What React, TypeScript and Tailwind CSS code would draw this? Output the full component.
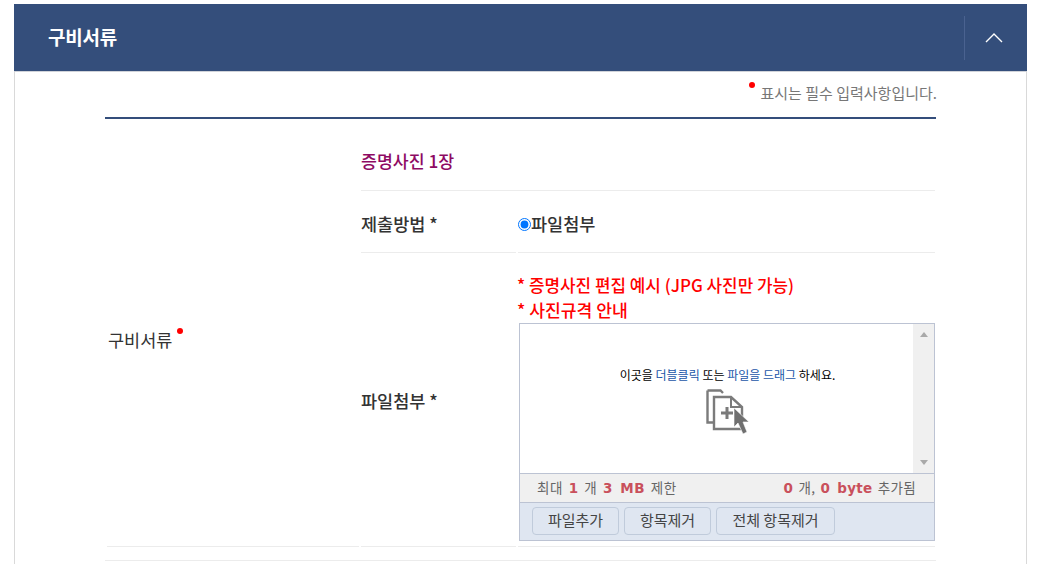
const FONT = "font-['Noto_Sans_CJK_KR','Noto_Sans',sans-serif]";

function RedDot({ className }: { className: string }) {
  return <span className={`inline-block w-[6px] h-[6px] rounded-full bg-[#ff0000] ${className}`} />;
}

function DropIcon() {
  return (
    <svg width="44" height="46" viewBox="0 0 44 46" fill="none" className="mt-[6px]">
      <path d="M1.5 1.5H14.5L17 4M1.5 1.5V33.5H8" stroke="#7b7b7b" strokeWidth="2.4" />
      <path d="M8 8H25L36 18V40H8Z" fill="#fff" stroke="#7b7b7b" strokeWidth="2.4" />
      <path d="M25 8V18H36" stroke="#7b7b7b" strokeWidth="2" />
      <path d="M15 24H27M21 18V30" stroke="#7b7b7b" strokeWidth="3" />
      <path d="M28 19V38L32 34L37 45L41 43L37 33H43Z" fill="#6f6f6f" stroke="#fff" strokeWidth="0.6" />
    </svg>
  );
}

function Num({ children }: { children: string }) {
  return <b className="text-[#c9505c] font-['DejaVu_Sans'] font-bold">{children}</b>;
}

function Uploader() {
  return (
    <div className="w-[416px] border border-[#bcc3d3] flex flex-col">
      <div className="flex h-[149px]">
        <div className="flex-1 flex flex-col items-center pl-[22px] pt-[43px] text-[12px] leading-[16px] text-black">
          <p>
            이곳을 <span className="text-[#1a56a8]">더블클릭</span> 또는{' '}
            <span className="text-[#1a56a8]">파일을 드래그</span> 하세요.
          </p>
          <DropIcon />
        </div>
        <div className="w-[21px] bg-[#f0f0f0] flex flex-col items-center justify-between py-[8px]">
          <span className="w-0 h-0 border-x-[4.5px] border-x-transparent border-b-[5px] border-b-[#a9a9a9]" />
          <span className="w-0 h-0 border-x-[4.5px] border-x-transparent border-t-[5px] border-t-[#a9a9a9]" />
        </div>
      </div>
      <div className="h-[29px] bg-[#f0f0f0] border-t border-[#bcc3d3] flex items-center justify-between pl-[17px] pr-[18px] text-[13.5px] text-[#666]">
        <p className="whitespace-pre tracking-[0.6px] [word-spacing:2px]">
          최대 <Num>1</Num> 개 <Num>3 MB</Num> 제한
        </p>
        <p className="whitespace-pre tracking-[0.3px] [word-spacing:2px]">
          <Num>0</Num> 개, <Num>0 byte</Num> 추가됨
        </p>
      </div>
      <div className="h-[38px] bg-[#dfe6f1] border-t border-[#bcc3d3] flex items-center gap-[5px] pl-[12px] pb-[2px]">
        {[
          ['파일추가', 'w-[87px]'],
          ['항목제거', 'w-[87px]'],
          ['전체 항목제거', 'w-[119px]'],
        ].map(([label, width]) => (
          <button
            key={label}
            className={`${width} h-[28px] rounded-[4px] border border-[#c0cbdb] bg-[#dfe6f1] text-[15px] text-[#444]`}
          >
            {label}
          </button>
        ))}
      </div>
    </div>
  );
}

export default function App() {
  return (
    <div className={`${FONT} w-[1045px] h-[564px] overflow-hidden bg-white pt-[4px] pl-[14px]`}>
      <div className="w-[1013px]">
        <div className="h-[68px] bg-[#344e7b] border-b border-[#d0d3d9] flex items-center justify-between pl-[34px]">
          <h2 className="text-[19px] font-bold tracking-[-0.2px] text-white">구비서류</h2>
          <div className="w-[63px] h-[44px] border-l border-[#4a6290] flex items-center justify-center pr-[4px]">
            <svg width="18" height="11" viewBox="0 0 18 11" fill="none">
              <path d="M1 10L9 2L17 10" stroke="#fff" strokeWidth="1.4" />
            </svg>
          </div>
        </div>

        <div className="h-[492px] border-x border-[#d9d9d9] pl-[90px] pr-[90px]">
          <p className="h-[45px] -mr-[1px] flex items-center justify-end text-[15px] text-[#777] pb-[3px]">
            <RedDot className="mr-[6px] mb-[16px]" />
            표시는 필수 입력사항입니다.
          </p>

          <div className="border-t-2 border-[#344e7b] w-[831px]">
            <div className="grid grid-cols-[256px_1fr] h-[428px]">
              <div className="border-b border-[#ececec] ml-[2px] mr-[2px] pl-[1px] flex items-center pt-[16px] text-[17.5px] text-[#333]">
                <span>구비서류</span>
                <RedDot className="ml-[5px] mb-[20px]" />
              </div>
              <div className="flex flex-col pr-[1px]">
                <div className="h-[72px] border-b border-[#ececec] pt-[30px] text-[17.3px] leading-[24px] font-medium text-[#8e0a63]">
                  증명사진 1장
                </div>
                <div className="h-[62px] grid grid-cols-[155px_1fr] gap-x-[2px]">
                  <div className="border-b border-[#ececec] flex items-center pt-[6px] text-[17.5px] font-medium text-[#333]">
                    제출방법 *
                  </div>
                  <div className="border-b border-[#ececec] flex items-center pt-[6px] text-[17.5px] font-medium text-[#333]">
                    <input type="radio" defaultChecked className="w-[13px] h-[13px] m-0 accent-[#0075ff]" />
                    파일첨부
                  </div>
                </div>
                <div className="h-[294px] grid grid-cols-[155px_1fr] gap-x-[2px]">
                  <div className="border-b border-[#ececec] flex items-center pt-[4px] text-[17.5px] font-medium text-[#333]">
                    파일첨부 *
                  </div>
                  <div className="border-b border-[#ececec] pt-[19px]">
                    <p className="-ml-[1px] text-[16.9px] leading-[25px] font-medium text-[#ff0000]">* 증명사진 편집 예시 (JPG 사진만 가능)</p>
                    <p className="-ml-[1px] text-[17.2px] leading-[25px] font-medium text-[#ff0000]">* 사진규격 안내</p>
                    <div className="ml-[1px] mt-[1px]">
                      <Uploader />
                    </div>
                  </div>
                </div>
              </div>
            </div>
            <div className="h-[14px] border-b border-[#ececec]" />
          </div>
        </div>
      </div>
    </div>
  );
}
